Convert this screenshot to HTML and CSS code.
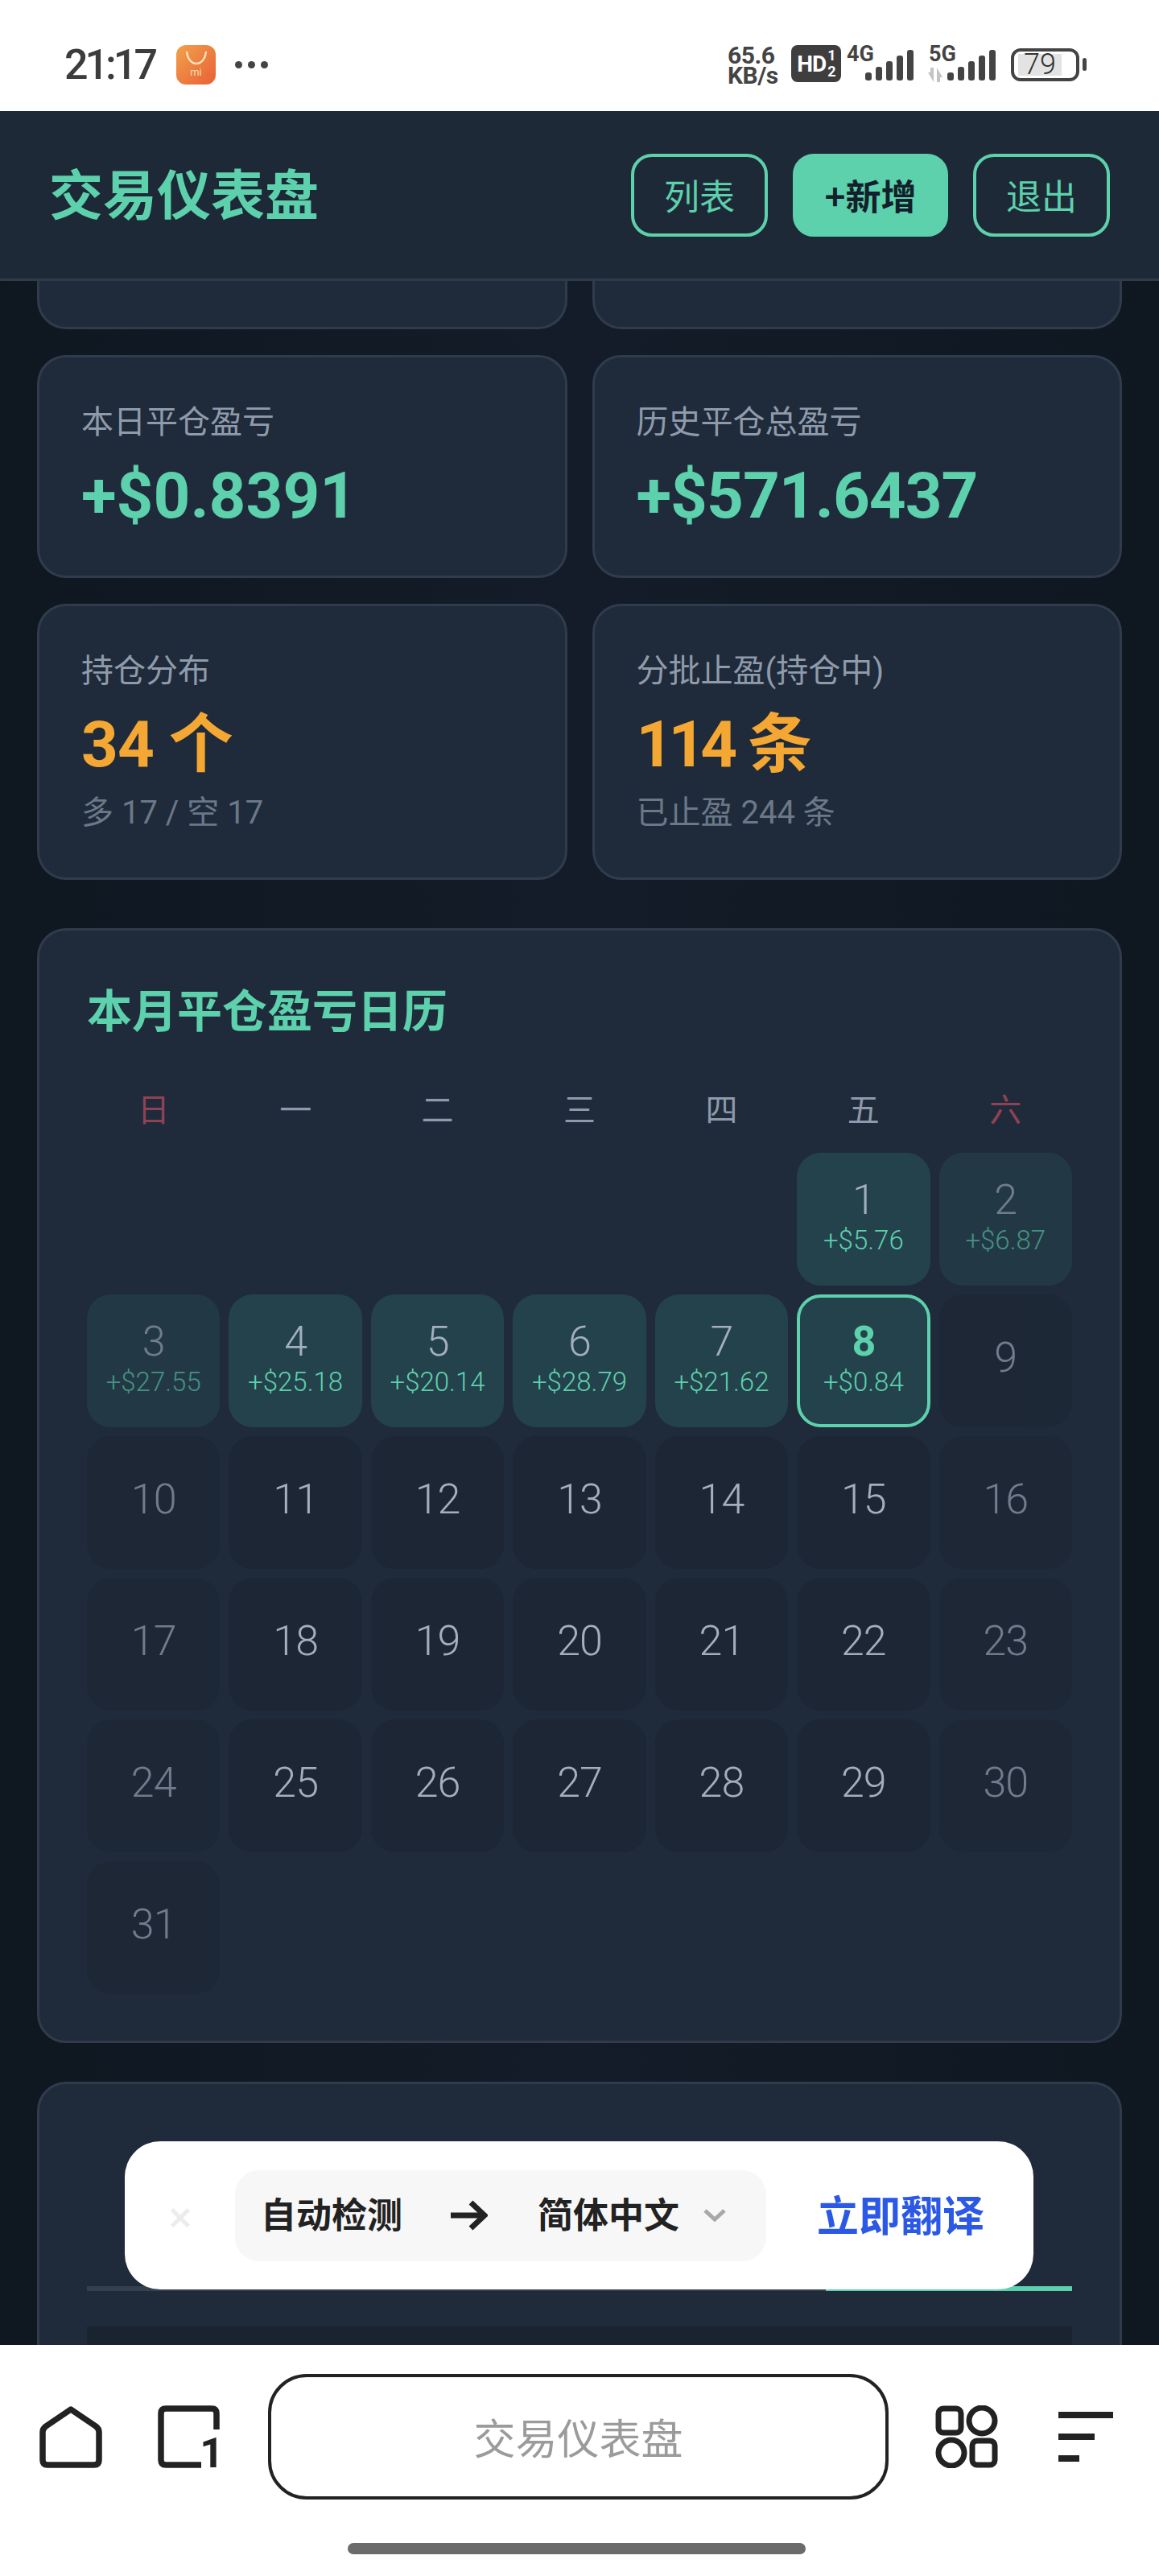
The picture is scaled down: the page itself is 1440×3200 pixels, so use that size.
FILE: index.html
```html
<!DOCTYPE html>
<html lang="zh-CN">
<head>
    <meta charset="UTF-8">
    <title>交易仪表盘</title>
    <link rel="stylesheet" href="styles.css">
</head>
<body>
<div class="phone">

    <div class="status-bar">
        <div class="status-left">
            <span class="clock">21:17</span>
            <div class="mi-app">
                <svg class="mi-handle" width="28" height="20" viewBox="0 0 28 20"><path d="M2 2 C4 22 24 22 26 2" fill="none" stroke="#fbe3c0" stroke-width="2.5"/></svg>
                <span class="mi-label">mi</span>
            </div>
            <div class="status-dots"><i></i><i></i><i></i></div>
        </div>
        <div class="status-right">
            <div class="net-speed"><span>65.6</span><span>KB/s</span></div>
            <div class="hd-badge"><b>HD</b><span class="hd-nums"><span>1</span><span>2</span></span></div>
            <div class="signal">
                <span class="signal-name">4G</span>
                <svg width="60" height="40" viewBox="0 0 60 40" fill="#444"><rect x="0" y="28" width="8" height="10" rx="3"/><rect x="13" y="21" width="8" height="17" rx="3"/><rect x="26" y="14" width="8" height="24" rx="3"/><rect x="39" y="7" width="8" height="31" rx="3"/><rect x="52" y="0" width="8" height="38" rx="3"/></svg>
            </div>
            <div class="signal signal-5g">
                <span class="signal-name">5G</span>
                <svg class="signal-arrows" width="20" height="18" viewBox="0 0 20 18" fill="#c4c4c4"><path d="M1 6h3V0h4v18z"/><path d="M19 12h-3v6h-4V0z"/></svg>
                <svg width="60" height="40" viewBox="0 0 60 40" fill="#444"><rect x="0" y="28" width="8" height="10" rx="3"/><rect x="13" y="21" width="8" height="17" rx="3"/><rect x="26" y="14" width="8" height="24" rx="3"/><rect x="39" y="7" width="8" height="31" rx="3"/><rect x="52" y="0" width="8" height="38" rx="3"/></svg>
            </div>
            <div class="battery"><div class="battery-level">79</div></div>
            <div class="battery-nub"></div>
        </div>
    </div>

    <header class="top-bar">
        <h1 class="brand">交易仪表盘</h1>
        <nav class="top-actions">
            <button class="btn">列表</button>
            <button class="btn btn-primary">+新增</button>
            <button class="btn">退出</button>
        </nav>
    </header>

    <main class="dashboard">
        <div class="stat-row">
            <div class="card card-cut"></div>
            <div class="card card-cut"></div>
        </div>

        <div class="stat-row">
            <div class="card stat-card">
                <div class="stat-label">本日平仓盈亏</div>
                <div class="stat-value green wide">+$0.8391</div>
            </div>
            <div class="card stat-card">
                <div class="stat-label">历史平仓总盈亏</div>
                <div class="stat-value green">+$571.6437</div>
            </div>
        </div>

        <div class="stat-row">
            <div class="card stat-card">
                <div class="stat-label">持仓分布</div>
                <div class="stat-value orange">34 个</div>
                <div class="stat-sub">多 17 / 空 17</div>
            </div>
            <div class="card stat-card">
                <div class="stat-label">分批止盈(持仓中)</div>
                <div class="stat-value orange"><span class="tight">114</span> 条</div>
                <div class="stat-sub">已止盈 244 条</div>
            </div>
        </div>

        <section class="card calendar">
            <h2 class="calendar-title">本月平仓盈亏日历</h2>
            <div class="week-head">
                <span class="holiday">日</span><span>一</span><span>二</span><span>三</span><span>四</span><span>五</span><span class="holiday">六</span>
            </div>
            <div class="month-grid">
                <div></div><div></div><div></div><div></div><div></div>
                <div class="day profit"><span class="day-num">1</span><span class="day-pnl">+$5.76</span></div>
                <div class="day profit weekend"><span class="day-num">2</span><span class="day-pnl">+$6.87</span></div>

                <div class="day profit weekend"><span class="day-num">3</span><span class="day-pnl">+$27.55</span></div>
                <div class="day profit"><span class="day-num">4</span><span class="day-pnl">+$25.18</span></div>
                <div class="day profit"><span class="day-num">5</span><span class="day-pnl">+$20.14</span></div>
                <div class="day profit"><span class="day-num">6</span><span class="day-pnl">+$28.79</span></div>
                <div class="day profit"><span class="day-num">7</span><span class="day-pnl">+$21.62</span></div>
                <div class="day profit today"><span class="day-num">8</span><span class="day-pnl">+$0.84</span></div>
                <div class="day weekend"><span class="day-num">9</span></div>

                <div class="day weekend"><span class="day-num">10</span></div>
                <div class="day"><span class="day-num">11</span></div>
                <div class="day"><span class="day-num">12</span></div>
                <div class="day"><span class="day-num">13</span></div>
                <div class="day"><span class="day-num">14</span></div>
                <div class="day"><span class="day-num">15</span></div>
                <div class="day weekend"><span class="day-num">16</span></div>

                <div class="day weekend"><span class="day-num">17</span></div>
                <div class="day"><span class="day-num">18</span></div>
                <div class="day"><span class="day-num">19</span></div>
                <div class="day"><span class="day-num">20</span></div>
                <div class="day"><span class="day-num">21</span></div>
                <div class="day"><span class="day-num">22</span></div>
                <div class="day weekend"><span class="day-num">23</span></div>

                <div class="day weekend"><span class="day-num">24</span></div>
                <div class="day"><span class="day-num">25</span></div>
                <div class="day"><span class="day-num">26</span></div>
                <div class="day"><span class="day-num">27</span></div>
                <div class="day"><span class="day-num">28</span></div>
                <div class="day"><span class="day-num">29</span></div>
                <div class="day weekend"><span class="day-num">30</span></div>

                <div class="day weekend"><span class="day-num">31</span></div>
            </div>
        </section>

        <section class="card positions">
            <div class="tabs"><span class="tab"></span><span class="tab tab-active"></span></div>
            <div class="table-head"></div>
        </section>
    </main>

    <div class="translate-bar">
        <span class="translate-close">✕</span>
        <div class="translate-langs">
            <span>自动检测</span>
            <svg class="translate-arrow" width="46" height="38" viewBox="0 0 46 38" fill="none" stroke="#222" stroke-width="7"><path d="M0 19H42"/><path d="M25 3 L42 19 L25 35"/></svg>
            <span>简体中文</span>
            <svg class="translate-chevron" width="28" height="16" viewBox="0 0 28 16" fill="none" stroke="#a8a8a8" stroke-width="5"><path d="M2 2 L14 13 L26 2"/></svg>
        </div>
        <span class="translate-go">立即翻译</span>
    </div>

    <footer class="browser-bar">
        <div class="browser-row">
            <svg width="78" height="78" viewBox="0 0 78 78" fill="none" stroke="#222" stroke-width="7.5" stroke-linejoin="round"><path d="M39 5 L70 26 Q74 29 74 33 V68 Q74 74 68 74 H10 Q4 74 4 68 V33 Q4 29 8 26 Z"/></svg>
            <div class="tabs-icon">
                <svg width="78" height="78" viewBox="0 0 78 78" fill="none" stroke="#222" stroke-width="7.5"><path d="M73 30 V10 Q73 4 67 4 H10 Q4 4 4 10 V68 Q4 74 10 74 H54"/></svg>
                <span class="tabs-count">1</span>
            </div>
            <div class="address">交易仪表盘</div>
            <svg class="grid-icon" width="78" height="78" viewBox="0 0 78 78" fill="none" stroke="#222" stroke-width="7">
                <rect x="4" y="4" width="28" height="30" rx="6"/>
                <circle cx="58" cy="19" r="16"/>
                <circle cx="20" cy="59" r="16"/>
                <rect x="46" y="44" width="28" height="30" rx="6"/>
            </svg>
            <div class="menu-icon"><i></i><i></i><i></i></div>
        </div>
        <div class="home-pill"></div>
    </footer>

</div>
</body>
</html>
```

FILE: styles.css
```css
* {
    box-sizing: border-box;
}

body {
    margin: 0;
    background: #fff;
    font-family: Roboto, "Noto Sans CJK SC", sans-serif;
}

.phone {
    position: relative;
    width: 1440px;
    height: 3200px;
    display: flex;
    flex-direction: column;
    overflow: hidden;
}

/* status bar */
.status-bar {
    height: 138px;
    flex: none;
    background: #fff;
    padding: 56px 90px 0 80px;
    display: flex;
    justify-content: space-between;
    align-items: flex-start;
    color: #444;
}

.status-left {
    display: flex;
    align-items: center;
    height: 49px;
}

.clock {
    width: 139px;
    font-size: 52px;
    font-weight: 500;
    letter-spacing: -4px;
    color: #3c3c3c;
}

.mi-app {
    width: 49px;
    height: 49px;
    border-radius: 12px;
    background: linear-gradient(135deg, #f0a24c, #ea5f35);
    display: flex;
    flex-direction: column;
    align-items: center;
    padding-top: 6px;
    color: #fbdcb8;
}

.mi-label {
    font-size: 13px;
    line-height: 14px;
    margin-top: 1px;
}

.status-dots {
    display: flex;
    gap: 7px;
    margin-left: 24px;
}

.status-dots i {
    width: 9px;
    height: 9px;
    border-radius: 50%;
    background: #444;
}

.status-right {
    display: flex;
    align-items: flex-start;
}

.net-speed {
    width: 79px;
    display: flex;
    flex-direction: column;
    font-size: 30px;
    font-weight: 700;
    line-height: 25px;
    letter-spacing: -0.5px;
}

.hd-badge {
    width: 62px;
    height: 46px;
    border-radius: 8px;
    background: #3e3e3e;
    color: #fff;
    display: flex;
    align-items: center;
    justify-content: center;
    font-size: 28px;
    letter-spacing: -1px;
}

.hd-nums {
    display: flex;
    flex-direction: column;
    font-size: 18px;
    font-weight: 700;
    line-height: 20px;
    margin-left: 2px;
}

.signal {
    position: relative;
    margin-left: 30px;
    padding-top: 6px;
}

.signal-5g {
    margin-left: 42px;
}

.signal-name {
    position: absolute;
    left: -23px;
    top: -4px;
    font-size: 27px;
    font-weight: 700;
    line-height: 30px;
}

.signal-arrows {
    position: absolute;
    left: -25px;
    top: 28px;
}

.battery {
    width: 85px;
    height: 41px;
    margin: 4px 0 0 19px;
    border: 4px solid #444;
    border-radius: 12px;
    padding: 3px 5px;
}

.battery-level {
    width: 54px;
    height: 27px;
    background: #e3e3e3;
    text-align: center;
    font-size: 36px;
    font-weight: 300;
    line-height: 27px;
    color: #333;
}

.battery-nub {
    width: 5px;
    height: 16px;
    margin: 16px 0 0 4px;
    border-radius: 3px;
    background: #444;
}

/* header */
.top-bar {
    height: 211px;
    flex: none;
    background: #1e2937;
    border-bottom: 3px solid #2f3b4b;
    padding: 0 61px 0 61px;
    display: flex;
    justify-content: space-between;
    align-items: center;
}

.brand {
    margin: 0 0 10px;
    font-size: 67px;
    font-weight: 700;
    color: #5dd0ac;
    font-family: "Noto Sans CJK SC", sans-serif;
}

.top-actions {
    display: flex;
    gap: 31px;
}

.btn {
    width: 170px;
    height: 103px;
    padding: 0;
    border: 4px solid #5dd0ac;
    border-radius: 26px;
    background: transparent;
    color: #5dd0ac;
    font-family: "Noto Sans CJK SC", sans-serif;
    font-size: 44px;
}

.btn-primary {
    width: 193px;
    background: #5dd0ac;
    color: #13202b;
    font-weight: 700;
}

/* content */
.dashboard {
    flex: 1;
    min-height: 0;
    overflow: hidden;
    padding: 0 46px;
    background: linear-gradient(90deg, #0f1721 0, #131c28 50%, #0f1721 100%);
    font-family: Roboto, "Noto Sans CJK SC", sans-serif;
}

.card {
    background: #1f2b3b;
    border: 3px solid #2f3c4c;
    border-radius: 36px;
}

.stat-row {
    display: grid;
    grid-template-columns: 1fr 1fr;
    gap: 31px;
    margin-bottom: 32px;
}

.card-cut {
    height: 60px;
    border-top: 0;
    border-radius: 0 0 36px 36px;
}

.stat-card {
    padding: 51px 52px 51px;
}

.stat-label {
    font-size: 40px;
    line-height: 60px;
    color: #8f9bab;
}

.stat-value {
    margin-top: 13px;
    font-size: 80px;
    font-weight: 700;
    line-height: 96px;
    letter-spacing: -1px;
}

.wide {
    letter-spacing: 0;
}

.green {
    color: #5dd0ac;
}

.orange {
    color: #f5a733;
}

.tight {
    letter-spacing: -6px;
}

.stat-sub {
    margin-top: 8px;
    font-size: 40px;
    line-height: 58px;
    color: #6b7888;
}

/* calendar */
.calendar {
    margin-top: 60px;
    padding: 58px 59px 58px;
}

.calendar-title {
    margin: 0;
    font-size: 56px;
    font-weight: 700;
    line-height: 76px;
    color: #5dd0ac;
    font-family: "Noto Sans CJK SC", sans-serif;
}

.week-head {
    display: grid;
    grid-template-columns: repeat(7, 1fr);
    column-gap: 11px;
    margin-top: 62px;
    font-size: 40px;
    line-height: 56px;
    text-align: center;
    color: #8e9aab;
}

.holiday {
    color: #8f4254;
}

.month-grid {
    display: grid;
    grid-template-columns: repeat(7, 1fr);
    grid-auto-rows: 165px;
    gap: 11px;
    margin-top: 24px;
}

.day {
    display: flex;
    flex-direction: column;
    align-items: center;
    justify-content: center;
    padding-bottom: 8px;
    border-radius: 30px;
    background: #1c2634;
    color: #a3afbe;
}

.day-num {
    font-size: 52px;
    font-weight: 300;
    line-height: 60px;
    letter-spacing: -1px;
}

.day-pnl {
    font-size: 33px;
    font-weight: 300;
    line-height: 40px;
    color: #5dd0ac;
}

.profit {
    background: #24424c;
}

.weekend {
    opacity: 0.62;
}

.today {
    border: 4px solid #5dd0ac;
}

.today .day-num {
    font-weight: 700;
    color: #5dd0ac;
}

/* table under the calendar, cut by the browser bar */
.positions {
    margin-top: 48px;
    padding: 60px 59px 0;
    height: 500px;
}

.tabs {
    display: grid;
    grid-template-columns: 3fr 1fr;
    height: 197px;
    align-items: end;
}

.tab {
    height: 6px;
    background: #33404f;
}

.tab-active {
    background: #5dd0ac;
}

.table-head {
    height: 200px;
    margin-top: 44px;
    background: #1a2431;
}

/* translate popup, lies over the page */
.translate-bar {
    position: absolute;
    left: 155px;
    top: 2660px;
    width: 1129px;
    height: 184px;
    border-radius: 44px;
    background: #fff;
    display: flex;
    align-items: center;
    font-family: "Noto Sans CJK SC", sans-serif;
}

.translate-close {
    width: 137px;
    text-align: center;
    font-size: 38px;
    font-weight: 700;
    color: #ececec;
}

.translate-langs {
    width: 660px;
    height: 113px;
    border-radius: 30px;
    background: #f7f7f7;
    display: flex;
    align-items: center;
    padding: 0 0 6px 32px;
    font-size: 44px;
    font-weight: 700;
    color: #222;
}

.translate-arrow {
    margin: 6px 62px 0 60px;
}

.translate-chevron {
    margin: 6px 0 0 30px;
}

.translate-go {
    margin: 0 0 6px 63px;
    font-size: 52px;
    font-weight: 700;
    color: #2b59e6;
}

/* browser bar */
.browser-bar {
    height: 287px;
    flex: none;
    background: #fff;
    padding-top: 36px;
}

.browser-row {
    height: 156px;
    padding: 0 57px 0 49px;
    display: flex;
    align-items: center;
}

.tabs-icon {
    position: relative;
    width: 78px;
    height: 78px;
    margin-left: 69px;
}

.tabs-count {
    position: absolute;
    top: 34px;
    right: -4px;
    font-size: 52px;
    font-weight: 700;
    line-height: 52px;
    color: #222;
}

.address {
    width: 771px;
    height: 156px;
    margin-left: 59px;
    border: 4px solid #222;
    border-radius: 48px;
    font-family: "Noto Sans CJK SC", sans-serif;
    font-size: 52px;
    line-height: 148px;
    text-align: center;
    color: #9b9b9b;
}

.grid-icon {
    margin-left: 58px;
}

.menu-icon {
    width: 68px;
    margin-left: 75px;
    display: flex;
    flex-direction: column;
    gap: 19px;
}

.menu-icon i {
    display: block;
    height: 8px;
    background: #222;
}

.menu-icon i:nth-child(2) {
    width: 45px;
}

.menu-icon i:nth-child(3) {
    width: 26px;
}

.home-pill {
    width: 569px;
    height: 14px;
    margin: 54px 0 0 432px;
    border-radius: 7px;
    background: #6b6b6b;
}
```
